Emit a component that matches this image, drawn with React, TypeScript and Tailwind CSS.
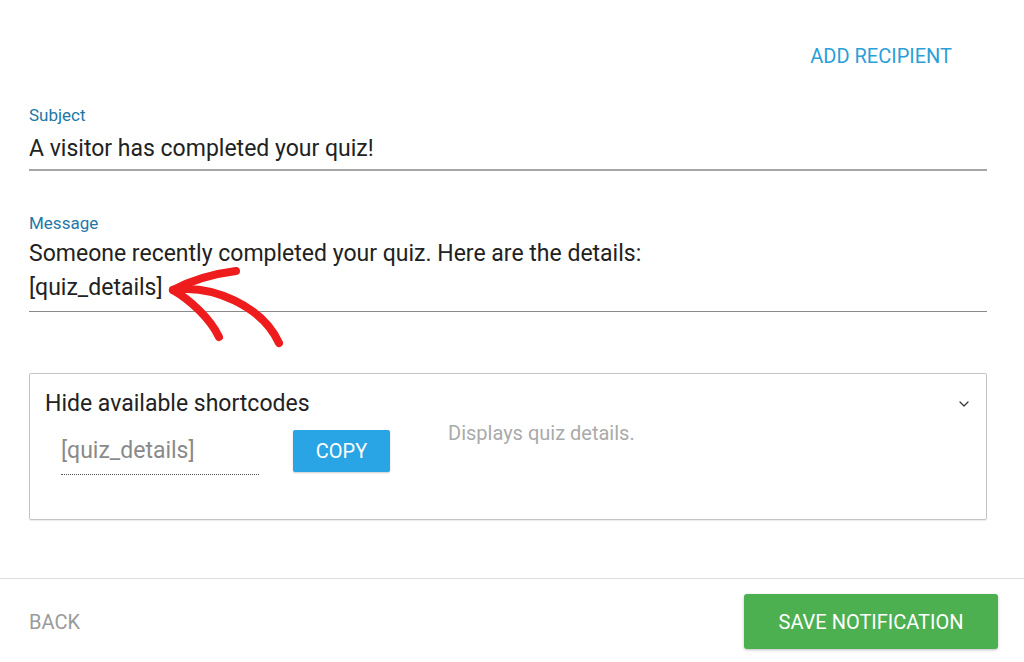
import { ChevronDown } from "lucide-react";

function RedArrow() {
  return (
    <svg
      className="absolute left-0 top-0 pointer-events-none"
      width="1024"
      height="662"
      viewBox="0 0 1024 662"
      fill="none"
    >
      <g stroke="#ee1c1c" strokeWidth="8" strokeLinecap="round" strokeLinejoin="round">
        <path d="M173 290 C 192 280, 212 274, 236 271" />
        <path d="M173 290 C 190 300, 210 318, 219 337" />
        <path d="M173 290 C 212 284, 262 306, 279 343" />
      </g>
    </svg>
  );
}

export default function App() {
  return (
    <div className="relative w-[1024px] h-[662px] bg-white font-['Roboto','Liberation_Sans',sans-serif] overflow-hidden">
      <div className="pl-[29px] pr-[37px]">
        {/* Recipient action */}
        <div className="flex justify-end pt-[44px] pr-[35px]">
          <button className="text-[20px] leading-[24px] text-[#2a9fd8] uppercase">
            Add Recipient
          </button>
        </div>

        {/* Subject */}
        <div className="mt-[37px] text-[17px] leading-[20px] text-[#2377a6]">Subject</div>
        <div className="mt-[10px] pb-[6px] border-b-2 border-[#a6a6a6] text-[23px] leading-[28px] text-[#222]">
          A visitor has completed your quiz!
        </div>

        {/* Message */}
        <div className="mt-[42px] text-[17px] leading-[20px] text-[#2377a6]">Message</div>
        <div className="mt-[4px] pb-[6px] border-b border-[#8a8a8a] text-[23px] leading-[34px] text-[#222]">
          <div>Someone recently completed your quiz. Here are the details:</div>
          <div>[quiz_details]</div>
        </div>

        {/* Shortcodes panel */}
        <div className="mt-[61px] h-[147px] border border-[#c4c4c4] rounded-[2px] shadow-[0_1px_1px_rgba(0,0,0,0.08)]">
          <div className="flex items-center justify-between pt-[16px] pl-[15px] pr-[14px]">
            <span className="text-[23px] leading-[28px] text-[#222]">Hide available shortcodes</span>
            <ChevronDown className="w-[16px] h-[16px] text-[#333]" strokeWidth={1.8} />
          </div>
          <div className="flex items-start mt-[12px] pl-[31px]">
            <div className="w-[198px] pt-[7px] pb-[9px] border-b border-dotted border-[#555] text-[23px] leading-[28px] text-[#8a8a8a]">
              [quiz_details]
            </div>
            <button className="ml-[34px] w-[97px] h-[42px] bg-[#29a4e4] rounded-[2px] text-white text-[20px] shadow-[0_1px_2px_rgba(0,0,0,0.2)]">
              COPY
            </button>
            <div className="ml-[58px] -mt-[9px] text-[20px] leading-[24px] text-[#aaaaaa]">
              Displays quiz details.
            </div>
          </div>
        </div>
      </div>

      {/* Footer */}
      <div className="mt-[58px] border-t border-[#dedede] flex items-center justify-between pl-[29px] pr-[26px] pt-[15px]">
        <button className="text-[20px] text-[#9a9a9a]">BACK</button>
        <button className="w-[254px] h-[55px] bg-[#4caf50] rounded-[3px] text-white text-[20px] shadow-[0_1px_3px_rgba(0,0,0,0.25)]">
          SAVE NOTIFICATION
        </button>
      </div>

      <RedArrow />
    </div>
  );
}
